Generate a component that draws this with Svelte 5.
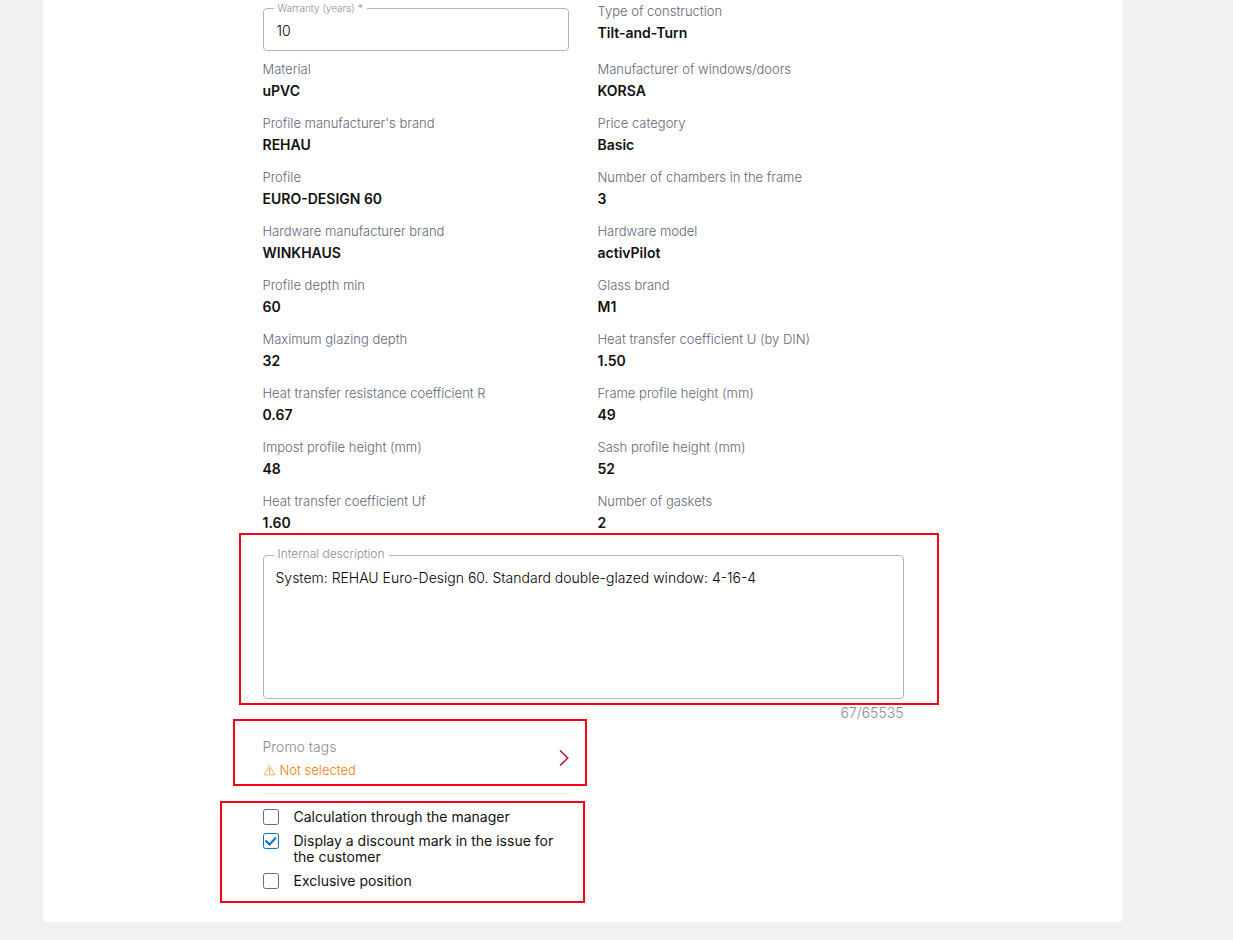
<script>
  const specs = [
    { label: 'Type of construction', value: 'Tilt-and-Turn' },
    { label: 'Material', value: 'uPVC' },
    { label: 'Manufacturer of windows/doors', value: 'KORSA' },
    { label: "Profile manufacturer's brand", value: 'REHAU' },
    { label: 'Price category', value: 'Basic' },
    { label: 'Profile', value: 'EURO-DESIGN 60' },
    { label: 'Number of chambers in the frame', value: '3' },
    { label: 'Hardware manufacturer brand', value: 'WINKHAUS' },
    { label: 'Hardware model', value: 'activPilot' },
    { label: 'Profile depth min', value: '60' },
    { label: 'Glass brand', value: 'M1' },
    { label: 'Maximum glazing depth', value: '32' },
    { label: 'Heat transfer coefficient U (by DIN)', value: '1.50' },
    { label: 'Heat transfer resistance coefficient R', value: '0.67' },
    { label: 'Frame profile height (mm)', value: '49' },
    { label: 'Impost profile height (mm)', value: '48' },
    { label: 'Sash profile height (mm)', value: '52' },
    { label: 'Heat transfer coefficient Uf', value: '1.60' },
    { label: 'Number of gaskets', value: '2' }
  ];
  const maxLength = 65535;

  let warranty = $state('10');
  let description = $state('System: REHAU Euro-Design 60. Standard double-glazed window: 4-16-4');
  let options = $state([
    { id: 'manager', label: 'Calculation through the manager', checked: false },
    { id: 'discount', label: 'Display a discount mark in the issue for the customer', checked: true },
    { id: 'exclusive', label: 'Exclusive position', checked: false }
  ]);
</script>

<main class="card">
  <form class="form">
    <div class="specs">
      <div class="field warranty">
        <label class="small" for="warranty">Warranty (years) *</label>
        <input id="warranty" type="text" required bind:value={warranty} />
      </div>
      {#each specs as spec}
        <div class="spec">
          <div class="name">{spec.label}</div>
          <div class="value">{spec.value}</div>
        </div>
      {/each}
    </div>

    <section class="description marked">
      <div class="field">
        <label for="description">Internal description</label>
        <textarea id="description" maxlength={maxLength} bind:value={description}></textarea>
      </div>
      <div class="counter">{description.length}/{maxLength}</div>
    </section>

    <section class="promo marked">
      <button type="button">
        <span class="promo-text">
          <span class="promo-title">Promo tags</span>
          <span class="promo-state">
            <svg width="13" height="12" viewBox="0 0 13 12" aria-hidden="true">
              <path d="M6.5 1.2 12 10.8H1Z" fill="none" stroke="#fbb66b" stroke-linejoin="round" />
              <path d="M6.5 4v3.6M6.5 8.4v1.2" stroke="#fa9a38" stroke-width="1.4" />
            </svg>
            Not selected
          </span>
        </span>
        <svg width="10" height="18" viewBox="0 0 10 18" aria-hidden="true">
          <path d="M1 1.5 8.8 9 1 16.5" fill="none" stroke="#b5122f" stroke-width="1.5" />
        </svg>
      </button>
    </section>

    <section class="options marked">
      {#each options as option}
        <label class="option" for={option.id}>
          <input id={option.id} type="checkbox" bind:checked={option.checked} />
          <svg class="box" width="16" height="16" viewBox="0 0 16 16" aria-hidden="true">
            <rect x="0.5" y="0.5" width="15" height="15" rx="2" />
            {#if option.checked}
              <path d="M2.5 7.5 6.5 11.5 13 4.5" />
            {/if}
          </svg>
          <span>{option.label}</span>
        </label>
      {/each}
    </section>
  </form>
</main>

<style>
  :global(body) {
    background: #f1f1f1;
  }
  .card {
    box-sizing: border-box;
    max-width: 1080px;
    margin: 0 18px 18px 43px;
    padding: 3px 24px 33px;
    background: #fff;
    border-radius: 0 0 4px 4px;
    color: #111;
    font-family: Inter, 'Liberation Sans', sans-serif;
    font-size: 14px;
  }
  .form {
    max-width: 641px;
    margin: 0 auto;
  }
  .specs {
    display: grid;
    grid-template-columns: 1fr 1fr;
    gap: 10px 29px;
  }
  .name {
    color: #5f6778;
    font-size: 13px;
    font-weight: 300;
    line-height: 16px;
  }
  .value {
    font-weight: 600;
    line-height: 28px;
  }
  .field {
    position: relative;
  }
  .field label {
    position: absolute;
    top: -9px;
    left: 11px;
    padding: 0 4px;
    background: #fff;
    color: #8c8c8c;
    font-size: 12px;
    font-weight: 300;
    line-height: 16px;
  }
  .field label.small {
    top: -8px;
    font-size: 10px;
  }
  .field input,
  .field textarea {
    display: block;
    box-sizing: border-box;
    width: 100%;
    margin: 0;
    border: 1px solid #b4b4b4;
    border-radius: 4px;
    background: transparent;
    color: #000;
    font: inherit;
    font-weight: 300;
    line-height: 20px;
    outline: none;
  }
  .warranty {
    margin-top: 5px;
  }
  .field input {
    height: 43px;
    padding: 2px 13px 0;
  }
  .field textarea {
    height: 144px;
    padding: 12px;
    resize: none;
  }
  .marked {
    position: relative;
  }
  .marked::after {
    content: '';
    position: absolute;
    border: 2px solid #fb0019;
    pointer-events: none;
  }
  .description {
    padding-top: 18px;
  }
  .description::after {
    inset: -4px -35px 18px -24px;
  }
  .counter {
    margin-top: 4px;
    color: #8c8c8c;
    font-weight: 300;
    line-height: 20px;
    text-align: right;
  }
  .promo,
  .options {
    width: calc(50% - 14px);
  }
  .promo::after {
    inset: -4px -18px 8px -30px;
  }
  .promo button {
    display: flex;
    align-items: center;
    justify-content: space-between;
    width: 100%;
    padding: 12px 0;
    border: 0;
    border-bottom: 1px solid #e8e8e8;
    background: none;
    font: inherit;
    font-weight: 300;
    text-align: left;
    cursor: pointer;
  }
  .promo-text {
    display: flex;
    flex-direction: column;
  }
  .promo-title {
    color: #8c8c8c;
    line-height: 24px;
  }
  .promo-state {
    display: flex;
    align-items: center;
    gap: 4px;
    color: #f08000;
    font-size: 13px;
    line-height: 22px;
  }
  .options {
    display: flex;
    flex-direction: column;
    gap: 8px;
    padding-top: 15px;
  }
  .options::after {
    inset: 7px -16px -14px -43px;
  }
  .option {
    display: flex;
    gap: 15px;
    line-height: 16px;
    cursor: pointer;
  }
  .option input {
    position: absolute;
    opacity: 0;
  }
  .box {
    flex: none;
    fill: #fff;
    stroke: #636b80;
  }
  .option input:checked + .box {
    stroke: #0a73c7;
  }
  .box path {
    fill: none;
    stroke-width: 2;
  }
</style>
